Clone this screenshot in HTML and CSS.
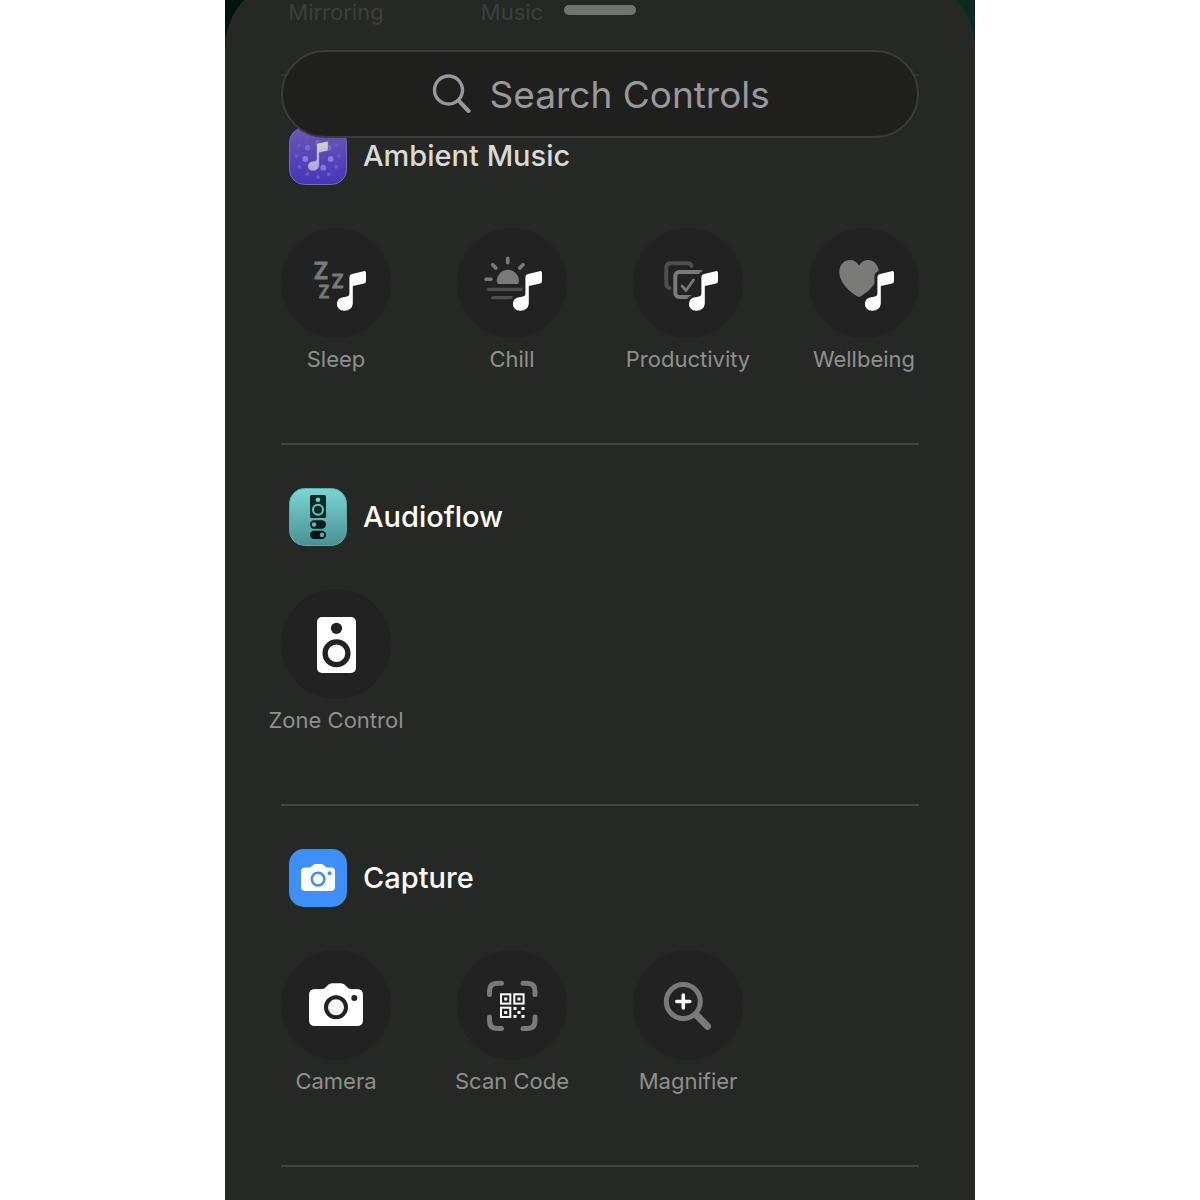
FILE: index.html
```html
<!DOCTYPE html>
<html lang="en">
<head>
    <meta charset="UTF-8">
    <meta name="viewport" content="width=device-width, initial-scale=1.0">
    <title>Controls Gallery</title>
    <link rel="stylesheet" href="styles.css">
</head>
<body>
    <!-- Shared icon shapes -->
    <svg class="defs" aria-hidden="true">
        <symbol id="note" viewBox="0 0 110 110">
            <path d="M68.4 49Q68.4 46.6 71 46L82.5 43.2Q85 42.6 85 45V53Q85 55 83 55.5L71.8 58V75C71.8 80 68 82.7 63.5 82.7C59 82.7 56 80 56 76C56 71 59.5 69.3 64 68.9C67 68.6 68.4 68 68.4 65.5Z"/>
        </symbol>
        <symbol id="camera" viewBox="0 0 110 110">
            <path fill="#fff" d="M34 39H41Q43.5 39 45.5 36.5Q48 33.3 51 33.3H60Q63 33.3 65.5 36.5Q67.5 39 70 39H76Q82 39 82 45V70Q82 76 76 76H34Q28 76 28 70V45Q28 39 34 39Z"/>
            <circle cx="55" cy="57.3" r="10" fill="none" stroke="currentColor" stroke-width="4"/>
            <circle cx="73.3" cy="48" r="3" fill="currentColor"/>
        </symbol>
    </svg>

    <div class="phone">
        <main class="sheet">
            <!-- Grabber and search stay above the scrolled list -->
            <header class="top">
                <div class="grabber"></div>
                <label class="search">
                    <svg viewBox="0 0 40 40" aria-hidden="true">
                        <circle cx="17.5" cy="16" r="14"/>
                        <path d="M28 27L37.5 37" stroke-width="4"/>
                    </svg>
                    <input type="text" placeholder="Search Controls" aria-label="Search Controls">
                </label>
            </header>

            <div class="list">
                <div class="grid faded">
                    <span class="label">iPhone<br>Mirroring</span>
                    <span class="label">Recognize<br>Music</span>
                </div>

                <!-- Ambient Music -->
                <section class="group first">
                    <h2>
                        <svg class="app-icon" viewBox="0 0 58 58" aria-hidden="true">
                            <defs>
                                <linearGradient id="purple" x1="0" y1="0" x2="0" y2="1">
                                    <stop offset="0" stop-color="#6a58b2"/>
                                    <stop offset="1" stop-color="#4635b9"/>
                                </linearGradient>
                                <linearGradient id="silver" x1="0" y1="0" x2="0" y2="1">
                                    <stop offset="0" stop-color="#d0cfd2"/>
                                    <stop offset="1" stop-color="#aea6d8"/>
                                </linearGradient>
                            </defs>
                            <rect x="0.5" y="0.5" width="57" height="57" rx="15" fill="url(#purple)" stroke="#7668c4"/>
                            <g fill="#6a58cb">
                                <circle cx="18.3" cy="10.3" r="2"/>
                                <circle cx="39.7" cy="10.3" r="2"/>
                                <circle cx="10.5" cy="18.3" r="2"/>
                                <circle cx="47.3" cy="18.3" r="2"/>
                                <circle cx="7.7" cy="29" r="2"/>
                                <circle cx="50" cy="29" r="2"/>
                                <circle cx="10.5" cy="39.7" r="2"/>
                                <circle cx="47.3" cy="39.7" r="2"/>
                                <circle cx="18.3" cy="47.3" r="2"/>
                                <circle cx="39.7" cy="47.3" r="2"/>
                                <circle cx="29" cy="50" r="2"/>
                            </g>
                            <g fill="#8875e6">
                                <circle cx="28.7" cy="15.7" r="2.8" opacity="0.5"/>
                                <circle cx="18.7" cy="20.7" r="2.8" opacity="0.7"/>
                                <circle cx="39.7" cy="20.7" r="2.8" opacity="0.7"/>
                                <circle cx="16.3" cy="32" r="2.9"/>
                                <circle cx="41.7" cy="32" r="2.9"/>
                                <circle cx="34.3" cy="40.7" r="2.9"/>
                            </g>
                            <path fill="url(#silver)" stroke="#4b3c9c" stroke-width="0.5" d="M27.5 17.5Q27.5 16.4 28.5 16.2L38.2 14.2Q39.3 14 39.3 15V22.8Q39.3 23.8 38.3 24L30.3 25.7V38C30.3 41.7 27.5 43.9 24 43.9C21 43.9 18.8 42.2 18.8 39.5C18.8 36 21.5 34.3 25 34.1C27 34 27.5 33.3 27.5 32Z"/>
                        </svg>
                        Ambient Music
                    </h2>
                    <div class="grid">
                        <button type="button" class="control">
                            <svg class="tile" viewBox="0 0 110 110" aria-hidden="true">
                                <g class="zzz">
                                    <text x="32.5" y="51" font-size="23">Z</text>
                                    <text x="50.5" y="60" font-size="19">Z</text>
                                    <text x="37.5" y="69.5" font-size="17">Z</text>
                                </g>
                                <use href="#note" class="note"/>
                            </svg>
                            <span class="label">Sleep</span>
                        </button>
                        <button type="button" class="control">
                            <svg class="tile" viewBox="0 0 110 110" aria-hidden="true">
                                <path class="gray" d="M41 56Q39.7 54.5 39.7 52A11.2 11.2 0 0 1 62 52Q62 54.5 61 56Z"/>
                                <path class="line" stroke-width="3.6" d="M50.7 30.4V34.8M35.7 36.7L38.8 40M66 36.7L62.8 40M29 51.3H34"/>
                                <path class="line dim" stroke-width="3.3" d="M31.3 61.3H70M35.7 69.7H60"/>
                                <use href="#note" class="note"/>
                            </svg>
                            <span class="label">Chill</span>
                        </button>
                        <button type="button" class="control">
                            <svg class="tile" viewBox="0 0 110 110" aria-hidden="true">
                                <path class="line dim" stroke-width="4" d="M36.5 60Q33.3 59 33.3 55.5V40Q33.3 35.3 38 35.3H54Q58.3 35.3 58.5 38"/>
                                <rect class="line" stroke-width="4" x="42.3" y="44" width="29" height="25" rx="4"/>
                                <path class="line" stroke-width="2.8" d="M49 58L53 62.5L60.5 52"/>
                                <use href="#note" class="note"/>
                            </svg>
                            <span class="label">Productivity</span>
                        </button>
                        <button type="button" class="control">
                            <svg class="tile" viewBox="0 0 110 110" aria-hidden="true">
                                <path class="gray" d="M50 69C44 66.5 30.3 56 30.3 44C30.3 36.5 35.5 32 41 32C45 32 48 34 50 37.5C52 34 55 32 59 32C64.5 32 69.7 36.5 69.7 44C69.7 56 56 66.5 50 69Z"/>
                                <use href="#note" class="note"/>
                            </svg>
                            <span class="label">Wellbeing</span>
                        </button>
                    </div>
                </section>

                <!-- Audioflow -->
                <section class="group">
                    <h2>
                        <svg class="app-icon" viewBox="0 0 58 58" aria-hidden="true">
                            <defs>
                                <linearGradient id="teal" x1="0" y1="0" x2="0" y2="1">
                                    <stop offset="0" stop-color="#7ad6d3"/>
                                    <stop offset="1" stop-color="#4a9090"/>
                                </linearGradient>
                            </defs>
                            <rect x="0.5" y="0.5" width="57" height="57" rx="15" fill="url(#teal)" stroke="#5fa9a7"/>
                            <rect x="21" y="7" width="16" height="23" rx="1.5" fill="#0b2a28"/>
                            <circle cx="29" cy="11.7" r="2.3" fill="#73cfcc"/>
                            <circle cx="29" cy="21.7" r="5" fill="none" stroke="#6bc4c2" stroke-width="2"/>
                            <rect x="21" y="32.3" width="16" height="8.4" rx="4.2" fill="#071c1b"/>
                            <circle cx="25" cy="36.5" r="2.3" fill="#62b4b3"/>
                            <rect x="21" y="42.7" width="16" height="8.4" rx="4.2" fill="#041211"/>
                            <circle cx="33" cy="46.9" r="2.3" fill="#57a5a4"/>
                        </svg>
                        Audioflow
                    </h2>
                    <div class="grid">
                        <button type="button" class="control">
                            <svg class="tile" viewBox="0 0 110 110" aria-hidden="true">
                                <rect x="36" y="28" width="39" height="56" rx="5" fill="#fff"/>
                                <circle cx="55.5" cy="39.3" r="5.6" fill="#222"/>
                                <circle cx="55.5" cy="64.3" r="11.4" fill="none" stroke="#222" stroke-width="5.3"/>
                            </svg>
                            <span class="label">Zone Control</span>
                        </button>
                    </div>
                </section>

                <!-- Capture -->
                <section class="group">
                    <h2>
                        <svg class="app-icon capture" viewBox="0 0 58 58" aria-hidden="true">
                            <rect width="58" height="58" rx="15" fill="#3f8ff8"/>
                            <use href="#camera" x="-5.6" y="-6" width="69.3" height="69.3"/>
                        </svg>
                        Capture
                    </h2>
                    <div class="grid">
                        <button type="button" class="control">
                            <svg class="tile" viewBox="0 0 110 110" aria-hidden="true">
                                <use href="#camera"/>
                            </svg>
                            <span class="label">Camera</span>
                        </button>
                        <button type="button" class="control">
                            <svg class="tile" viewBox="0 0 110 110" aria-hidden="true">
                                <path class="line" stroke-width="5" d="M32.5 44.5V41Q32.5 33.3 40.5 33.3H44.5M66 33.3H70Q78 33.3 78 41V44.5M78 67V70.5Q78 78.5 70 78.5H66M44.5 78.5H40.5Q32.5 78.5 32.5 70.5V67"/>
                                <g fill="none" stroke="#fff" stroke-width="2">
                                    <rect x="44" y="44.3" width="9.3" height="9.3"/>
                                    <rect x="57.3" y="44.3" width="9.3" height="9.3"/>
                                    <rect x="44" y="57.7" width="9.3" height="9.3"/>
                                </g>
                                <path fill="#fff" d="M47.2 47.5h3v3h-3zM60.5 47.5h3v3h-3zM47.2 60.9h3v3h-3zM56.5 57h3v3h-3zM64.5 57h3v3h-3zM60.5 61h3v3h-3zM56.5 65h3v3h-3zM64.5 65h3v3h-3z"/>
                            </svg>
                            <span class="label">Scan Code</span>
                        </button>
                        <button type="button" class="control">
                            <svg class="tile" viewBox="0 0 110 110" aria-hidden="true">
                                <circle class="line" stroke-width="5" cx="50.3" cy="51.5" r="17"/>
                                <path class="line" stroke-width="7" d="M64 65.5L74.5 76.2"/>
                                <path d="M50.3 45V58M43.8 51.5H56.8" fill="none" stroke="#fff" stroke-width="3.6" stroke-linecap="round"/>
                            </svg>
                            <span class="label">Magnifier</span>
                        </button>
                    </div>
                </section>

                <div class="group"></div>
            </div>
        </main>
    </div>
</body>
</html>
```
FILE: styles.css
```css
* {
    box-sizing: border-box;
}
body {
    margin: 0;
    background: #fff;
    font-family: Inter, "Liberation Sans", sans-serif;
    -webkit-font-smoothing: antialiased;
}
.defs {
    position: absolute;
    width: 0;
    height: 0;
}
.phone {
    display: flex;
    max-width: 750px;
    height: 100vh;
    margin: 0 auto;
    overflow: hidden;
    background: linear-gradient(90deg, #02120f, #0a2b21);
}
/* The sheet starts a little above the screen edge */
.sheet {
    position: relative;
    flex: 1;
    margin-top: -22px;
    padding: 22px 56px 0;
    border-radius: 70px 70px 0 0;
    background: #262825;
}

/* Grabber and search */
.top {
    position: absolute;
    top: 27px;
    left: 56px;
    right: 56px;
    z-index: 1;
}
.grabber {
    width: 72px;
    height: 10px;
    margin: 0 auto 35px;
    border-radius: 5px;
    background: #717371;
}
.search {
    display: flex;
    align-items: center;
    justify-content: center;
    gap: 19px;
    height: 88px;
    border: 2px solid #3b3c3a;
    border-radius: 44px;
    background: #1f1f1e;
}
.search svg {
    width: 40px;
    height: 40px;
    fill: none;
    stroke: #98989d;
    stroke-width: 3.4;
    stroke-linecap: round;
}
.search input {
    width: 280px;
    padding: 0;
    border: none;
    outline: none;
    background: none;
    color: #fff;
    font-family: inherit;
    font-size: 37px;
}
.search input::placeholder {
    color: #98989d;
    opacity: 1;
}

/* Control list */
.list {
    margin-top: -27px;
}
.grid {
    display: grid;
    grid-template-columns: repeat(4, 110px);
    justify-content: space-between;
}
.label {
    color: #8f908e;
    font-size: 22px;
    line-height: 26px;
    text-align: center;
    white-space: nowrap;
}
.faded {
    height: 101px;
}
.faded .label {
    color: #3e3f3d;
}
.group {
    padding: 43px 0 71px;
    border-top: 2px solid #434545;
}
.group.first {
    padding-top: 51px;
    border-color: #343533;
}
.group h2 {
    display: flex;
    align-items: center;
    gap: 16px;
    margin: 0 0 43px;
    padding-left: 8px;
    color: #fff;
    font-size: 29px;
    font-weight: 500;
    line-height: 36px;
}
.group.first h2 {
    color: #dadbd9;
}
.app-icon {
    width: 58px;
    height: 58px;
}
.capture {
    color: #3f8ff8;
}
.control {
    display: flex;
    flex-direction: column;
    align-items: center;
    gap: 8px;
    padding: 0;
    border: none;
    background: none;
    font-family: inherit;
    cursor: pointer;
}
.tile {
    width: 110px;
    height: 110px;
    border-radius: 50%;
    background: #222;
    color: #222;
}

/* Icon paint */
.note {
    fill: #fff;
    stroke: #222;
    stroke-width: 6;
    paint-order: stroke;
}
.gray {
    fill: #7a7a78;
}
.line {
    fill: none;
    stroke: #7a7a78;
    stroke-linecap: round;
    stroke-linejoin: round;
}
.line.dim {
    stroke: #4e4e4d;
}
.zzz {
    fill: #7a7a78;
    stroke: #7a7a78;
    stroke-width: 0.8;
    stroke-linejoin: round;
    font-weight: 600;
}
```
